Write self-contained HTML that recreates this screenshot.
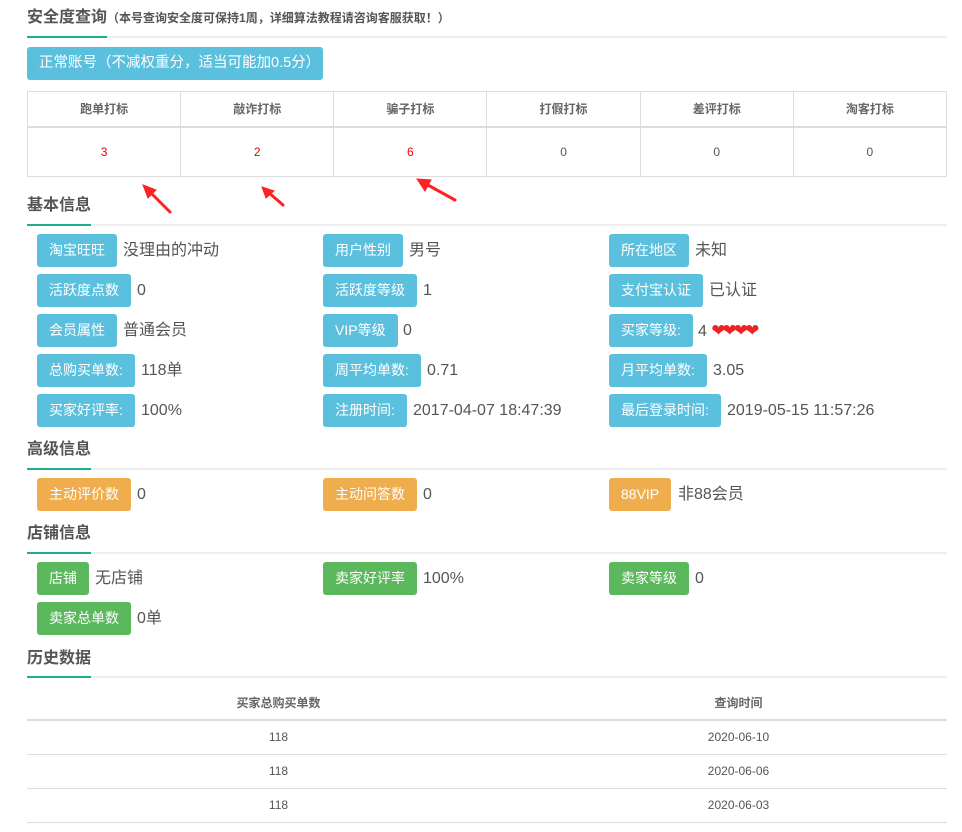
<!DOCTYPE html><html><head><meta charset="utf-8"><style>
*{margin:0;padding:0;box-sizing:border-box}
body{width:962px;height:832px;background:#fff;font-family:"Liberation Sans","Noto Sans CJK SC",sans-serif;color:#555;position:relative;overflow:hidden}
.a{position:absolute}
.h{position:absolute;left:27px;width:920px;height:20px;font-size:16px;font-weight:bold;color:#555;line-height:20px}
.ul{position:absolute;left:27px;width:920px;height:2px;background:#eee}
.ul i{display:block;width:64px;height:2px;background:#1fae8e}
.lb{position:absolute;height:33px;line-height:33px;padding:0 12px;font-size:14px;color:#fff;border-radius:3px;background:#5bc0de;white-space:nowrap}
.o{background:#f0ad4e}.g{background:#5cb85c}
.v{position:absolute;font-size:16px;color:#555;line-height:33px;white-space:nowrap}
table{border-collapse:collapse;position:absolute;left:27px;width:920px}
td{text-align:center;font-size:12px}
.hd td{font-weight:bold;color:#666}
</style></head><body>
<div class="h" style="top:8px">安全度查询<span style="font-size:12px">（本号查询安全度可保持1周，详细算法教程请咨询客服获取！）</span></div>
<div class="ul" style="top:36px"><i style="width:80px"></i></div>
<div class="lb" style="left:27px;top:47px;width:296px;font-size:14.5px;padding-left:12px">正常账号（不减权重分，适当可能加0.5分）</div>
<table style="top:91px">
<tr class="hd" style="height:35px"><td style="border:1px solid #ddd;border-bottom:2px solid #ddd">跑单打标</td><td style="border:1px solid #ddd;border-bottom:2px solid #ddd">敲诈打标</td><td style="border:1px solid #ddd;border-bottom:2px solid #ddd">骗子打标</td><td style="border:1px solid #ddd;border-bottom:2px solid #ddd">打假打标</td><td style="border:1px solid #ddd;border-bottom:2px solid #ddd">差评打标</td><td style="border:1px solid #ddd;border-bottom:2px solid #ddd">淘客打标</td></tr>
<tr style="height:50px"><td style="border:1px solid #ddd;color:#e00">3</td><td style="border:1px solid #ddd;color:#e00">2</td><td style="border:1px solid #ddd;color:#e00">6</td><td style="border:1px solid #ddd">0</td><td style="border:1px solid #ddd">0</td><td style="border:1px solid #ddd">0</td></tr>
</table>
<svg class="a" style="left:0;top:0" width="962" height="240">
<g fill="#f22" stroke="#f22" stroke-width="3" stroke-linecap="round">
<line x1="170" y1="212" x2="150" y2="192"/><polygon points="143,185 156,190 148,198" stroke-width="1"/>
<line x1="283" y1="205" x2="268" y2="192"/><polygon points="262,187 274,191 266,198" stroke-width="1"/>
<line x1="455" y1="200" x2="426" y2="184"/><polygon points="417,179 431,180 425,191" stroke-width="1"/>
</g></svg>
<div class="h" style="top:196px">基本信息</div>
<div class="ul" style="top:224px"><i></i></div>
<div class="lb" style="left:37px;top:234px">淘宝旺旺</div><div class="v" style="left:123px;top:234px">没理由的冲动</div>
<div class="lb" style="left:323px;top:234px">用户性别</div><div class="v" style="left:409px;top:234px">男号</div>
<div class="lb" style="left:609px;top:234px">所在地区</div><div class="v" style="left:695px;top:234px">未知</div>
<div class="lb" style="left:37px;top:274px">活跃度点数</div><div class="v" style="left:137px;top:274px">0</div>
<div class="lb" style="left:323px;top:274px">活跃度等级</div><div class="v" style="left:423px;top:274px">1</div>
<div class="lb" style="left:609px;top:274px">支付宝认证</div><div class="v" style="left:709px;top:274px">已认证</div>
<div class="lb" style="left:37px;top:314px">会员属性</div><div class="v" style="left:123px;top:314px">普通会员</div>
<div class="lb" style="left:323px;top:314px">VIP等级</div><div class="v" style="left:403px;top:314px">0</div>
<div class="lb" style="left:609px;top:314px">买家等级:</div><div class="v" style="left:698px;top:314px">4 <span style="color:#e22;font-size:17px;letter-spacing:-3px">❤❤❤❤</span></div>
<div class="lb" style="left:37px;top:354px">总购买单数:</div><div class="v" style="left:141px;top:354px">118单</div>
<div class="lb" style="left:323px;top:354px">周平均单数:</div><div class="v" style="left:427px;top:354px">0.71</div>
<div class="lb" style="left:609px;top:354px">月平均单数:</div><div class="v" style="left:713px;top:354px">3.05</div>
<div class="lb" style="left:37px;top:394px">买家好评率:</div><div class="v" style="left:141px;top:394px">100%</div>
<div class="lb" style="left:323px;top:394px">注册时间:</div><div class="v" style="left:413px;top:394px">2017-04-07 18:47:39</div>
<div class="lb" style="left:609px;top:394px">最后登录时间:</div><div class="v" style="left:727px;top:394px">2019-05-15 11:57:26</div>
<div class="h" style="top:440px">高级信息</div>
<div class="ul" style="top:468px"><i></i></div>
<div class="lb o" style="left:37px;top:478px">主动评价数</div><div class="v" style="left:137px;top:478px">0</div>
<div class="lb o" style="left:323px;top:478px">主动问答数</div><div class="v" style="left:423px;top:478px">0</div>
<div class="lb o" style="left:609px;top:478px">88VIP</div><div class="v" style="left:678px;top:478px">非88会员</div>
<div class="h" style="top:524px">店铺信息</div>
<div class="ul" style="top:552px"><i></i></div>
<div class="lb g" style="left:37px;top:562px">店铺</div><div class="v" style="left:95px;top:562px">无店铺</div>
<div class="lb g" style="left:323px;top:562px">卖家好评率</div><div class="v" style="left:423px;top:562px">100%</div>
<div class="lb g" style="left:609px;top:562px">卖家等级</div><div class="v" style="left:695px;top:562px">0</div>
<div class="lb g" style="left:37px;top:602px">卖家总单数</div><div class="v" style="left:137px;top:602px">0单</div>
<div class="h" style="top:649px">历史数据</div>
<div class="ul" style="top:676px"><i></i></div>
<table style="top:686px">
<tr class="hd" style="height:34px"><td style="width:503px;border-bottom:2px solid #ddd">买家总购买单数</td><td style="border-bottom:2px solid #ddd">查询时间</td></tr>
<tr style="height:34px"><td style="border-bottom:1px solid #ddd">118</td><td style="border-bottom:1px solid #ddd">2020-06-10</td></tr>
<tr style="height:34px"><td style="border-bottom:1px solid #ddd">118</td><td style="border-bottom:1px solid #ddd">2020-06-06</td></tr>
<tr style="height:34px"><td style="border-bottom:1px solid #ddd">118</td><td style="border-bottom:1px solid #ddd">2020-06-03</td></tr>
</table>
</body></html>
